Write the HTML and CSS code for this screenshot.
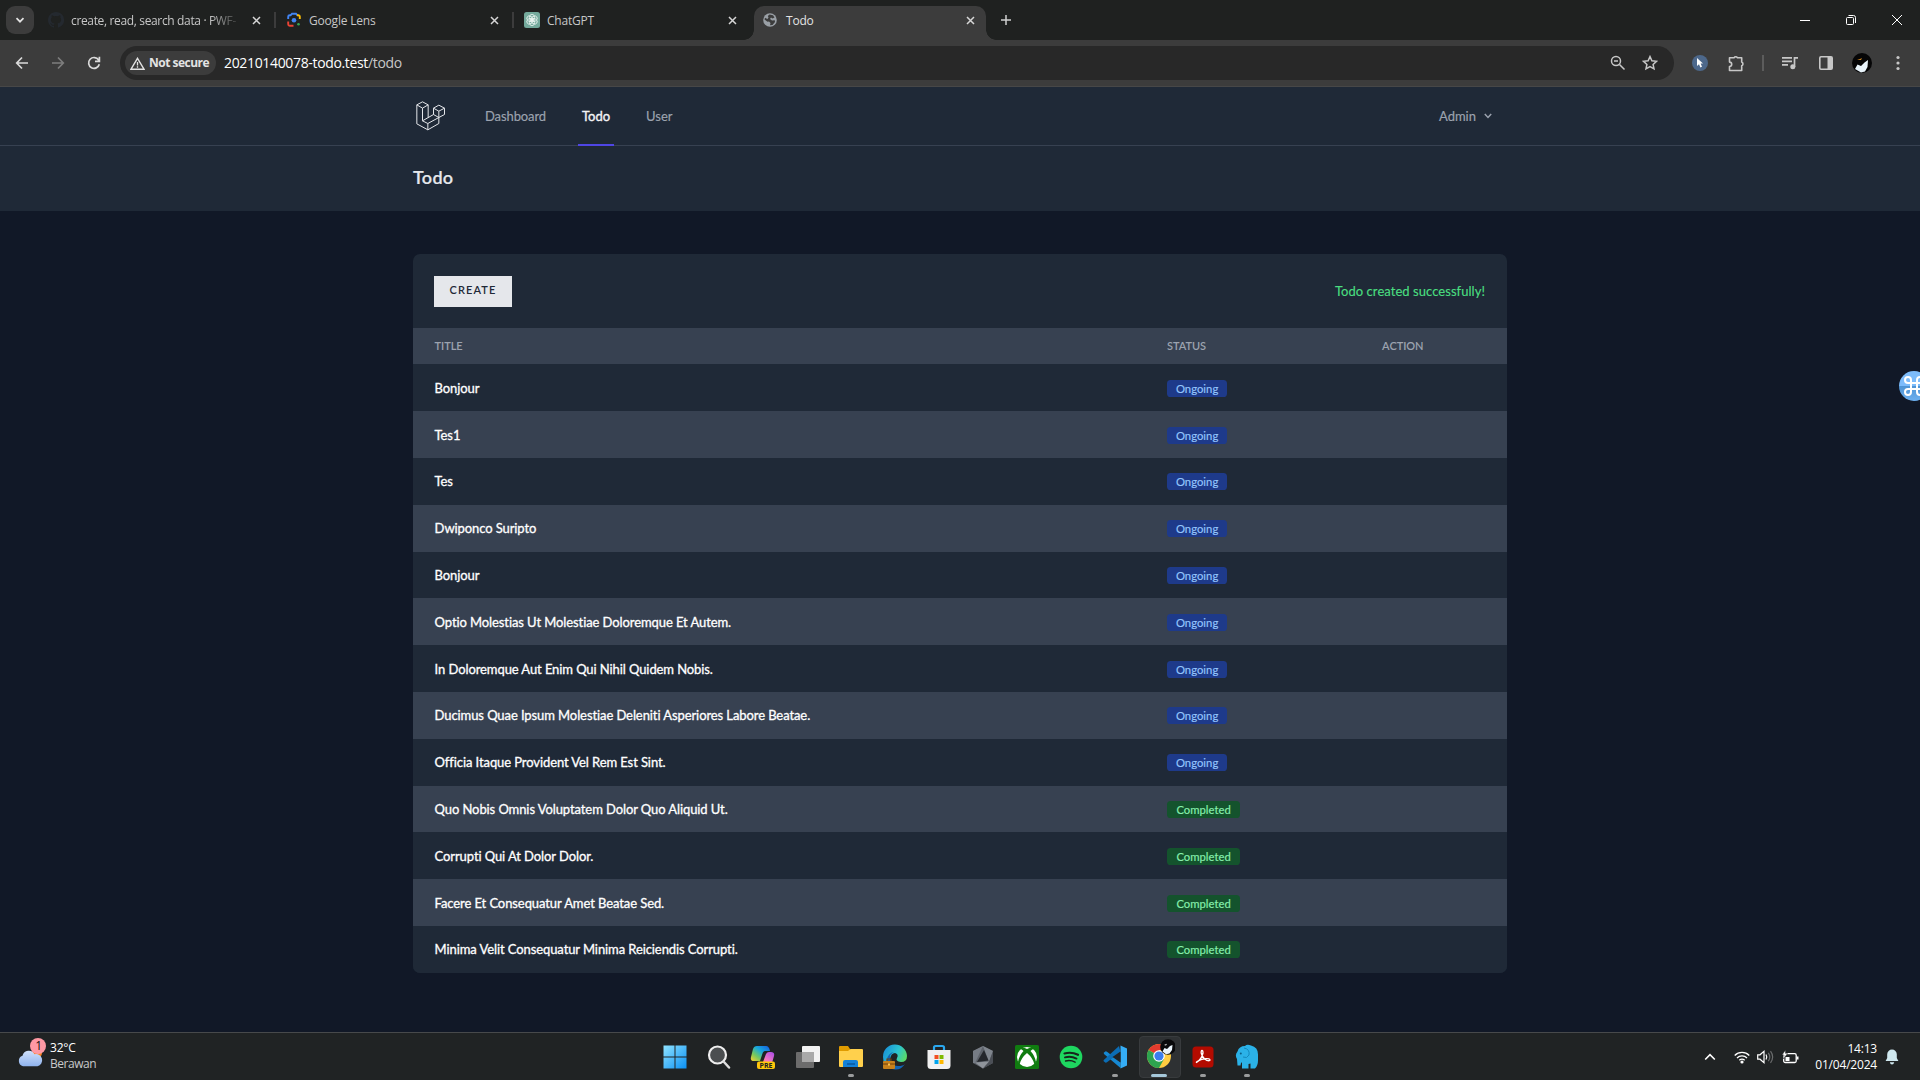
FILE: index.html
```html
<!DOCTYPE html>
<html lang="en">
<head>
<meta charset="utf-8">
<title>Todo</title>
<link rel="stylesheet" href="styles.css">
</head>
<body>
<div class="screen">
  <header class="tabstrip">
    <button class="tab-search"><svg width="10" height="10" viewBox="0 0 10 10"><path d="M1.5 3.2 5 6.7l3.500-3.500" fill="none" stroke="#e3e3e3" stroke-width="1.700"/></svg></button>
    <div class="tab">
      <svg class="favicon" width="16" height="16" viewBox="0 0 16 16"><path fill="#24292f" d="M8 0C3.580 0 0 3.580 0 8c0 3.540 2.290 6.530 5.470 7.590.4.070.55-.17.55-.38v-1.340c-2.230.48-2.700-1.070-2.700-1.070-.36-.92-.89-1.170-.89-1.170-.73-.5.050-.49.050-.49.800.060 1.230.830 1.230.830.720 1.220 1.870.870 2.330.660.070-.52.280-.87.510-1.070-1.780-.2-3.640-.89-3.640-3.950 0-.87.310-1.590.820-2.150-.08-.2-.36-1.020.080-2.120 0 0 .67-.21 2.200.820a7.500 7.500 0 0 1 4 0c1.530-1.040 2.200-.82 2.200-.82.440 1.100.160 1.920.080 2.120.510.560.820 1.270.820 2.150 0 3.070-1.870 3.750-3.650 3.950.290.250.540.730.540 1.480v2.200c0 .21.150.46.550.38A8 8 0 0 0 8 0Z"/></svg>
      <span class="tab-title fade">create, read, search data · PWF-</span>
      <svg class="tab-close" width="9" height="9" viewBox="0 0 9 9"><path d="m1 1 7 7M8 1 1 8"/></svg>
    </div>
    <i class="tab-sep"></i>
    <div class="tab">
      <svg class="favicon" width="16" height="16" viewBox="0 0 16 16"><g fill="none" stroke-width="1.900"><path d="M4.500 3.500 6 1.700h4l1.500 1.800" stroke="#4285f4"/><path d="M2.200 7V4.800a1.500 1.500 0 0 1 1.500-1.500H5" stroke="#4285f4"/><path d="M11 3.300h1.300a1.500 1.500 0 0 1 1.500 1.500V7" stroke="#fbbc04"/><path d="M2.200 9.500v2.700a1.500 1.500 0 0 0 1.500 1.500H7.500" stroke="#ea4335"/></g><circle cx="8" cy="8.300" r="2.300" fill="#4285f4"/><circle cx="12.500" cy="12.300" r="1.300" fill="#34a853"/></svg>
      <span class="tab-title">Google Lens</span>
      <svg class="tab-close" width="9" height="9" viewBox="0 0 9 9"><path d="m1 1 7 7M8 1 1 8"/></svg>
    </div>
    <i class="tab-sep"></i>
    <div class="tab tab-gpt">
      <svg class="favicon" width="16" height="16" viewBox="0 0 16 16"><rect width="16" height="16" rx="2.500" fill="#74aa9c"/><g fill="none" stroke="#eef6f3" stroke-width=".8"><ellipse cx="8" cy="5.600" rx="2.600" ry="3.300"/><ellipse cx="8" cy="5.600" rx="2.600" ry="3.300" transform="rotate(60 8 8)"/><ellipse cx="8" cy="5.600" rx="2.600" ry="3.300" transform="rotate(120 8 8)"/><ellipse cx="8" cy="5.600" rx="2.600" ry="3.300" transform="rotate(180 8 8)"/><ellipse cx="8" cy="5.600" rx="2.600" ry="3.300" transform="rotate(240 8 8)"/><ellipse cx="8" cy="5.600" rx="2.600" ry="3.300" transform="rotate(300 8 8)"/></g></svg>
      <span class="tab-title">ChatGPT</span>
      <svg class="tab-close" width="9" height="9" viewBox="0 0 9 9"><path d="m1 1 7 7M8 1 1 8"/></svg>
    </div>
    <div class="tab active">
      <svg class="favicon" width="14" height="14" viewBox="0 0 14 14"><circle cx="7" cy="7" r="6.800" fill="#9aa0a6"/><path fill="#3c3c3c" d="M6.500 1.500 10 2.300 11.500 4.500 9.500 5.500 8 4.500 7 6 9 7.500 11.800 7.200 12 9 9.500 12 7 12.300 7.500 10 6 8.500 4.500 8.800 1.500 6.500 2 4.800 4.500 6 5.500 4.500 4.800 3Z"/></svg>
      <span class="tab-title">Todo</span>
      <svg class="tab-close" width="9" height="9" viewBox="0 0 9 9"><path d="m1 1 7 7M8 1 1 8"/></svg>
    </div>
    <svg class="new-tab" width="12" height="12" viewBox="0 0 12 12"><path d="M6 1v10M1 6h10" stroke="#d0d0d0" stroke-width="1.500"/></svg>
    <div class="window-buttons">
      <span><svg width="10" height="10" viewBox="0 0 10 10"><path d="M0 5.500h10"/></svg></span>
      <span><svg width="10" height="10" viewBox="0 0 10 10"><rect x=".5" y="2.500" width="7" height="7" rx="1"/><path d="M2.500 .5H7.500a2 2 0 0 1 2 2v5.500"/></svg></span>
      <span><svg width="10" height="10" viewBox="0 0 10 10"><path d="m0 0 10 10M10 0 0 10"/></svg></span>
    </div>
  </header>

  <div class="toolbar">
    <span class="tool"><svg width="14" height="14" viewBox="0 0 14 14"><path d="M13 7H2M7 1.500 1.700 7 7 12.500" fill="none" stroke="#dadada" stroke-width="1.700"/></svg></span>
    <span class="tool"><svg width="14" height="14" viewBox="0 0 14 14"><path d="M1 7h11M7 1.500 12.300 7 7 12.500" fill="none" stroke="#7d7d7d" stroke-width="1.700"/></svg></span>
    <span class="tool"><svg width="14" height="14" viewBox="0 0 14 14"><path d="M11.600 4A5.400 5.400 0 1 0 12.300 8.200M12.400 .8v4.500H8" fill="none" stroke="#dadada" stroke-width="1.700"/></svg></span>
    <div class="omnibox">
      <div class="security"><svg width="15" height="13" viewBox="0 0 15 13"><path d="M7.500 1.300 14 12.200H1Z" fill="none" stroke="#e3e3e3" stroke-width="1.400"/><path d="M7.500 5v3.500M7.500 9.300v1.400" stroke="#e3e3e3" stroke-width="1.300"/></svg><b>Not secure</b></div>
      <div class="url"><span>20210140078-todo.test</span><span class="path">/todo</span></div>
      <svg class="zoom-icon" width="16" height="16" viewBox="0 0 16 16"><g fill="none" stroke="#c7c7c7" stroke-width="1.500"><circle cx="6" cy="6" r="4.500"/><path d="m9.500 9.500 5 5M4 6h4"/></g></svg>
      <svg class="star-icon" width="16" height="16" viewBox="0 0 16 16"><path d="m8 1.600 1.900 4.200 4.600.5-3.400 3.100.9 4.500L8 11.600l-4 2.300.9-4.500L1.500 6.300l4.600-.5Z" fill="none" stroke="#c7c7c7" stroke-width="1.500"/></svg>
    </div>
    <div class="extensions">
      <span class="tool"><svg width="16" height="16" viewBox="0 0 16 16"><circle cx="8" cy="8" r="8" fill="#4d688b"/><path d="m5 3 6 5.500H8.600l1.400 3.300-1.600.6L7 9.300l-2 1.600Z" fill="#fff"/></svg></span>
      <span class="tool"><svg width="17" height="17" viewBox="0 0 17 17"><path d="M1.500 2.800H6a2 2 0 0 1 3.500 0h4.200v4.300a2 2 0 0 1 0 3.700v4.700H1.500v-4a2.200 2.200 0 0 0 0-4.400Z" fill="none" stroke="#c7c7c7" stroke-width="1.600" stroke-linejoin="round"/></svg></span>
      <i class="tool-sep"></i>
      <span class="tool"><svg width="16" height="14" viewBox="0 0 16 14"><path d="M0 1.800h10M0 5.300h10M0 8.800h6M12.500 11V1.800H16" fill="none" stroke="#c7c7c7" stroke-width="1.700"/><circle cx="10.800" cy="10.800" r="2.500" fill="#c7c7c7"/></svg></span>
      <span class="tool"><svg width="14" height="14" viewBox="0 0 14 14"><rect x=".8" y=".8" width="12.400" height="12.400" rx="1.200" fill="none" stroke="#c7c7c7" stroke-width="1.600"/><path d="M8.500 1H13v12H8.500Z" fill="#c7c7c7"/></svg></span>
      <span class="tool"><svg width="20" height="20" viewBox="0 0 20 20"><circle cx="10" cy="10" r="10" fill="#050506"/><path d="m3 16 2.500-4.500L9 13l3.500-3.500L16 7l-.5 7-2.500 4.500L9 19.500Z" fill="#e9f4fb"/><path d="m5 7 3-1 2-1-1 2Z" fill="#d58a20"/></svg></span>
      <span class="tool"><svg width="4" height="16" viewBox="0 0 4 16" fill="#c7c7c7"><circle cx="2" cy="2.500" r="1.600"/><circle cx="2" cy="8" r="1.600"/><circle cx="2" cy="13.500" r="1.600"/></svg></span>
    </div>
  </div>

  <div class="page">
    <nav class="nav">
      <div class="container">
        <svg class="logo" width="30" height="30" viewBox="47.500 45.500 90 90"><path fill="none" stroke="#e5e7eb" stroke-width="3" stroke-linejoin="round" d="M67 48 50 57v57l33 18 33-19V76M67 48l17 9v38M50 57l17 10 17-10M67 67v38l16 8v19M67 105l33-19 16 9-33 18M100 86V67l16-9 17 9v19l-17 9M100 67l16 9 17-9"/></svg>
        <a class="nav-link dash">Dashboard</a>
        <a class="nav-link current">Todo</a>
        <a class="nav-link user">User</a>
        <div class="account"><span>Admin</span><svg width="8" height="6" viewBox="0 0 8 6"><path d="M.8 1 4 4.400 7.200 1" fill="none" stroke="#9ca3af" stroke-width="1.500"/></svg></div>
      </div>
    </nav>
    <div class="page-head"><div class="container"><h2>Todo</h2></div></div>
    <main class="card">
      <div class="card-top"><a class="create">CREATE</a><p class="success">Todo created successfully!</p></div>
      <div class="row thead"><span>TITLE</span><span>STATUS</span><span>ACTION</span></div>
      <div class="row"><span>Bonjour</span><span><em class="badge">Ongoing</em></span></div>
      <div class="row"><span>Tes1</span><span><em class="badge">Ongoing</em></span></div>
      <div class="row"><span>Tes</span><span><em class="badge">Ongoing</em></span></div>
      <div class="row"><span>Dwiponco Suripto</span><span><em class="badge">Ongoing</em></span></div>
      <div class="row"><span>Bonjour</span><span><em class="badge">Ongoing</em></span></div>
      <div class="row"><span>Optio Molestias Ut Molestiae Doloremque Et Autem.</span><span><em class="badge">Ongoing</em></span></div>
      <div class="row"><span>In Doloremque Aut Enim Qui Nihil Quidem Nobis.</span><span><em class="badge">Ongoing</em></span></div>
      <div class="row"><span>Ducimus Quae Ipsum Molestiae Deleniti Asperiores Labore Beatae.</span><span><em class="badge">Ongoing</em></span></div>
      <div class="row"><span>Officia Itaque Provident Vel Rem Est Sint.</span><span><em class="badge">Ongoing</em></span></div>
      <div class="row"><span>Quo Nobis Omnis Voluptatem Dolor Quo Aliquid Ut.</span><span><em class="badge done">Completed</em></span></div>
      <div class="row"><span>Corrupti Qui At Dolor Dolor.</span><span><em class="badge done">Completed</em></span></div>
      <div class="row"><span>Facere Et Consequatur Amet Beatae Sed.</span><span><em class="badge done">Completed</em></span></div>
      <div class="row"><span>Minima Velit Consequatur Minima Reiciendis Corrupti.</span><span><em class="badge done">Completed</em></span></div>
    </main>
    <div class="float-button"><svg width="20" height="20" viewBox="0 0 20 20"><path d="M7 13V4a3 3 0 1 0-3 3h12a3 3 0 1 0-3-3v12a3 3 0 1 0 3-3H4a3 3 0 1 0 3 3v-4" fill="none" stroke="#fff" stroke-width="2"/></svg></div>
  </div>

  <footer class="taskbar">
    <div class="weather">
      <svg width="28" height="30" viewBox="0 0 28 30"><defs><linearGradient id="cloud" x2="0" y2="1"><stop stop-color="#cfe0fb"/><stop offset="1" stop-color="#8fb3ee"/></linearGradient></defs><circle cx="19" cy="15" r="5" fill="#f58220"/><path d="M5.500 28A5.500 5.500 0 0 1 5 17.500 6.500 6.500 0 0 1 17 16a6 6 0 0 1 3 12Z" fill="url(#cloud)" transform="translate(-.5 .2)"/><circle cx="20" cy="8" r="8" fill="#ff99a4"/><text x="20.500" y="12.300" text-anchor="middle" class="weather-count">1</text></svg>
      <div class="weather-text"><span>32°C</span><span class="dim">Berawan</span></div>
    </div>
    <div class="apps">
      <span class="app"><svg width="24" height="24" viewBox="0 0 24 24"><defs><linearGradient id="win" x2="1" y2="1"><stop stop-color="#8fe3ff"/><stop offset="1" stop-color="#0a90f5"/></linearGradient></defs><path fill="url(#win)" d="M.5 .5h11v11H.5ZM12.500 .5h11v11h-11ZM.5 12.500h11v11H.5ZM12.500 12.500h11v11h-11Z"/></svg></span>
      <span class="app"><svg width="24" height="24" viewBox="0 0 24 24"><circle cx="10.500" cy="10" r="8.500" fill="#4b4e50" stroke="#eee" stroke-width="2.200"/><path d="m17 17 5 5.500" stroke="#ddd" stroke-width="2.500" stroke-linecap="round"/></svg></span>
      <span class="app"><svg width="26" height="26" viewBox="0 0 26 26"><defs><linearGradient id="cp1" x1="1" y1="0" x2="0" y2="1"><stop stop-color="#1558e0"/><stop offset=".4" stop-color="#18a9dc"/><stop offset=".7" stop-color="#77c95c"/><stop offset="1" stop-color="#ffd02e"/></linearGradient><linearGradient id="cp2" x1="1" y1="0" x2="0" y2="1"><stop stop-color="#a64bea"/><stop offset=".6" stop-color="#f476c1"/><stop offset="1" stop-color="#ff8d50"/></linearGradient></defs><path d="M7 2h9q3 0 4 5h-5q-2 0-3 4l-2 6H4q-4 0-3-4l2-8q1-3 4-3Z" fill="url(#cp1)"/><path d="M13 18l3-8q1-2 3-2h2q4 0 3 4l-2 7H9q3 0 4-1Z" fill="url(#cp2)"/><rect x="7" y="17.500" width="18" height="7.500" rx="2" fill="#fec70a"/><text x="16" y="24" text-anchor="middle" class="pre-text">PRE</text></svg></span>
      <span class="app"><svg width="25" height="24" viewBox="0 0 25 24"><rect x="7" y="1" width="18" height="16" rx="1" fill="#f2f2f2"/><rect x="1" y="7" width="18" height="16" rx="1" fill="#6c6c6c"/><path d="M7 7h12v10H7Z" fill="#a9a9a9"/></svg></span>
      <span class="app running"><svg width="26" height="24" viewBox="0 0 26 24"><path d="M1 2q0-1 1-1h8l2 3v5H1Z" fill="#e09b00"/><path d="M1 6h9l2.500-2H24q1 0 1 1v16q0 1-1 1H2q-1 0-1-1Z" fill="#ffd04c"/><path d="M5 22v-5q0-2 2-2h11q2 0 2 2v5Z" fill="#1481d8"/><path d="M9 18h8v2H9Z" fill="#0b62ae"/></svg></span>
      <span class="app"><svg width="26" height="26" viewBox="0 0 26 26"><defs><linearGradient id="edge" x2="1" y2=".5"><stop stop-color="#1687d9"/><stop offset=".6" stop-color="#2bc3cf"/><stop offset="1" stop-color="#5ddb62"/></linearGradient></defs><path d="M1 13A12 12 0 0 1 25 12q0 6-6 6-6-1-4-4 2-4-2-5-4 0-5 6 0 7 9 8-4 3-9 1-7-3-7-11Z" fill="url(#edge)"/><path d="M8 13q-1 9 8 9 5 0 7-2-4 6-10 5.500-9-1-8-10Q6 9 12 8q-4 2-4 5Z" fill="#1265b5"/><rect x="1" y="17" width="12" height="8" rx="1" fill="#c8811b"/><path d="M5 17v-2h4v2M1 20h12" fill="none" stroke="#70400d" stroke-width="1.200"/><path d="M6 19.500h2v2H6Z" fill="#ffc34d"/></svg></span>
      <span class="app"><svg width="24" height="26" viewBox="0 0 24 26"><path d="M7 7V3.500q0-1.500 1.500-1.500h7q1.500 0 1.500 1.500V7" fill="none" stroke="#2aa7ee" stroke-width="2.200"/><path d="M.5 6h23v15.500q0 3.500-3.500 3.500H4Q.5 25 .5 21.500Z" fill="#f1f1f1"/><path d="M7.500 11h4v4h-4Z" fill="#f25022"/><path d="M12.500 11h4v4h-4Z" fill="#7fba00"/><path d="M7.500 16h4v4h-4Z" fill="#00a4ef"/><path d="M12.500 16h4v4h-4Z" fill="#ffb900"/></svg></span>
      <span class="app"><svg width="24" height="24" viewBox="0 0 24 24"><path d="m12 1 10 5v12l-10 5.500L2 18V6Z" fill="#5d626a"/><path d="m12 1 10 5-4 11L12 1Z" fill="#7f858d"/><path d="M2 6 12 1 4 18 2 18Z" fill="#767c85"/><path d="m13 5 4.500 10.500L6 17Z" fill="#24272c"/><path d="m4 17.500 14-1-6 7Z" fill="#8f949b"/><path d="m18 17-6 6.500L22 18V6Z" fill="#4b4f56"/></svg></span>
      <span class="app"><svg width="24" height="24" viewBox="0 0 24 24"><rect width="24" height="24" rx="1.500" fill="#107c10"/><circle cx="12" cy="12" r="10" fill="#fff"/><path d="M12 8Q6 13 4.500 19.500L3 17Q4 11 8.500 6 6 3.500 5 4l2-1.500q3 0 5 1.500 2-1.500 5-1.500L19 4q-1-.5-3.500 2 4.500 5 5.500 11l-1.500 2.500Q18 13 12 8Z" fill="#107c10"/></svg></span>
      <span class="app"><svg width="24" height="24" viewBox="0 0 24 24"><circle cx="12" cy="12" r="11.300" fill="#1ed760"/><g fill="none" stroke="#17251c" stroke-linecap="round"><path d="M5.500 8.500q7-2 13.500 1.300" stroke-width="2.200"/><path d="M6 12.400q6-1.600 11.500 1.200" stroke-width="1.900"/><path d="M6.600 16q5-1.200 9.500 1.100" stroke-width="1.500"/></g></svg></span>
      <span class="app running"><svg width="24" height="24" viewBox="0 0 24 24"><path d="M17.500 1v22L1 9l-.3-1.200L2.300 6.500Q3 6 4 6.700L17.500 17Z" fill="#1688d2"/><path d="M17.500 7 4 17.300q-1 .7-1.700.2L.7 16.200q-.5-.6.3-1.400L16 1Z" fill="#0b6db5"/><path d="M17.500 .5 24 3.500v17l-6.500 3Z" fill="#35adf5"/><path d="m17.500 6.500-8 5.500 8 5.500Z" fill="#202324"/></svg></span>
      <span class="app focused"><svg width="30" height="30" viewBox="0 0 30 30"><circle cx="14" cy="17" r="12" fill="#ffcd41"/><path d="M14 17 3.600 11A12 12 0 0 1 24.400 11H14Z" fill="#e33b2e"/><path d="M14 17 3.600 11A12 12 0 0 0 14 29l5-9Z" fill="#2da44f"/><circle cx="14" cy="17" r="5.800" fill="#fff"/><circle cx="14" cy="17" r="4.600" fill="#3b7ded"/><circle cx="23" cy="8" r="7.800" fill="#09090b"/><path d="m17.500 12.500 2-3.500 2.500 1 3-3 2.500-1-.5 5-2.500 3.500-3.500.8Z" fill="#e9f4fb"/><path d="m19 6 3-1.200-1 1.800Z" fill="#eee"/></svg></span>
      <span class="app running"><svg width="22" height="22" viewBox="0 0 22 22"><rect x=".5" y=".5" width="21" height="21" rx="3.500" fill="#b30b00"/><path d="M4.500 16.500q5-3 6.500-9.500 0-2.500-1-2.500t-.8 2.500q1.300 5 5.300 7.300 3.500 1 3.500-.3 0-1.500-4-1.300-4.500.5-8 2.300-2 1.300-1.500 1.500Z" fill="none" stroke="#fff" stroke-width="1.300"/></svg></span>
      <span class="app running"><svg width="24" height="25" viewBox="0 0 24 25"><path d="M2 15Q-.5 11 2.500 7.500 4 2 10 2q2-2 6-.5 7 1.500 7 9v6q0 5-3 8h-4.500v-5l-2 .5v4.500H7V18q-1.500 1-1.500 3.500H2.500Z" fill="#2bb2e8"/><path d="M9 4q6 1 5 7-2 4-6 2" fill="none" stroke="#1489bd" stroke-width="1"/><circle cx="5.800" cy="9.500" r="1" fill="#0b5f87"/></svg></span>
    </div>
    <div class="tray">
      <svg class="chev" width="12" height="8" viewBox="0 0 12 8"><path d="m1.200 6.500 4.800-4.800 4.800 4.800" fill="none" stroke="#fff" stroke-width="1.600"/></svg>
      <svg class="wifi" width="16" height="14" viewBox="0 0 16 14"><g fill="none" stroke="#fff" stroke-width="1.300"><path d="M.7 5.500a10.300 10.300 0 0 1 14.600 0M3 8a7 7 0 0 1 10 0M5.300 10.300a4 4 0 0 1 5.400 0"/></g><circle cx="8" cy="12" r="1.600" fill="#fff"/></svg>
      <svg class="vol" width="17" height="14" viewBox="0 0 17 14"><g fill="none" stroke="#fff" stroke-width="1.200"><path d="M.7 4.800H3L7 1.400v11.200L3 9.200H.7Z"/><path d="M9 4.500q1.500 2.500 0 5"/><path d="M11.300 2.800q3 4.200 0 8.400M13.500 1.200q4.300 5.800 0 11.600" stroke="#6a6c6d"/></g></svg>
      <svg class="batt" width="17" height="14" viewBox="0 0 17 14"><rect x="1.700" y="3.700" width="12.500" height="8.800" rx="1.500" fill="none" stroke="#fff" stroke-width="1.300"/><path d="M14.500 6.500h2v3h-2ZM3.500 7h4v4h-4Z" fill="#fff"/><path d="M3.500 0 0 5h2L1.500 9 5.500 3.500h-2Z" fill="#fff" stroke="#202324" stroke-width=".5"/></svg>
      <div class="clock"><span>14:13</span><span>01/04/2024</span></div>
      <svg class="bell" width="14" height="16" viewBox="0 0 14 16"><path d="M7 .5a4.800 4.800 0 0 1 4.800 4.800V9l1.600 3H.6l1.600-3V5.300A4.800 4.800 0 0 1 7 .5ZM4.800 13.300h4.400Q8.700 15.500 7 15.500t-2.200-2.200Z" fill="#cfe8ef"/></svg>
    </div>
  </footer>
</div>
</body>
</html>
```
FILE: styles.css
```css
* { box-sizing: border-box; }
body { margin: 0; background: #111827; }
svg { display: block; flex: none; }
.screen { width: 1920px; height: 1080px; display: flex; flex-direction: column; overflow: hidden; font-family: "Open Sans", sans-serif; }

/* browser tabs */
.tabstrip { flex: none; height: 40px; background: #1f2120; display: flex; padding-left: 6px; }
.tab-search { width: 28px; height: 28px; margin: 6px 4px 0 0; padding: 0; border: 0; border-radius: 9px; background: #3c3c3c; display: grid; place-items: center; }
.tab { width: 236px; height: 40px; padding: 0 13px 0 10px; display: flex; align-items: center; gap: 7px; }
.tab-title { flex: 1; min-width: 0; white-space: nowrap; font-size: 12px; letter-spacing: -0.2px; color: #c7c7c7; line-height: 20px; padding-top: 1px; }
.fade { letter-spacing: -0.35px; -webkit-mask-image: linear-gradient(90deg, #000 80%, transparent 98%); mask-image: linear-gradient(90deg, #000 80%, transparent 98%); }
.tab-close { stroke: #d6d6d6; stroke-width: 1.500; }
.tab-sep { width: 2px; height: 16px; margin-top: 12px; background: #3c3c3c; }
.tab-gpt { width: 240px; padding: 0 17px 0 10px; }
.tab.active { position: relative; width: 232px; height: 34px; margin-top: 6px; padding: 0 11px 6px 9px; gap: 9px; background: #3c3c3c; border-radius: 10px 10px 0 0; }
.tab.active::before, .tab.active::after { content: ""; position: absolute; bottom: 0; width: 10px; height: 10px; }
.tab.active::before { left: -10px; background: radial-gradient(circle at 0 0, #1f2120 9.500px, #3c3c3c 10px); }
.tab.active::after { right: -10px; background: radial-gradient(circle at 100% 0, #1f2120 9.500px, #3c3c3c 10px); }
.active .tab-title { color: #e3e3e3; }
.new-tab { margin: 14px 0 0 14px; }
.window-buttons { margin-left: auto; display: flex; }
.window-buttons span { width: 46px; height: 40px; display: grid; place-items: center; }
.window-buttons svg { fill: none; stroke: #fff; stroke-width: 1; }

/* address bar */
.toolbar { flex: none; height: 47px; background: #3c3c3c; border-bottom: 1px solid #474747; padding: 0 4px; display: flex; align-items: center; }
.tool { width: 36px; height: 36px; display: grid; place-items: center; }
.omnibox { width: 1554px; height: 34px; margin-left: 8px; border-radius: 17px; background: #282828; display: flex; align-items: center; padding: 0 16px 0 5px; }
.security { width: 91px; height: 24px; border-radius: 12px; background: #3c3c3c; display: flex; align-items: center; gap: 4px; padding-left: 5px; color: #e3e3e3; font-size: 12px; letter-spacing: -0.5px; white-space: nowrap; }
.security b { font-weight: 700; padding-bottom: 1px; }
.url { flex: 1; margin-left: 8px; padding-bottom: 1px; font-size: 14px; letter-spacing: -0.34px; color: #fff; }
.path { color: #c7c7c7; }
.zoom-icon { margin-right: 16px; }
.extensions { display: flex; align-items: center; margin-left: 8px; }
.tool-sep { width: 2px; height: 16px; margin: 0 8px; background: #5c5c5c; }

/* web page */
.page { position: relative; flex: 1; min-height: 0; background: #111827; font-family: Lato, sans-serif; }
.container { width: 1094px; margin: 0 auto; display: flex; }
.nav { height: 59px; background: #1f2937; border-bottom: 1px solid #374151; }
.nav .container { height: 59px; padding-left: 3px; }
.logo { margin-top: 14px; }
.nav-link { height: 59px; padding: 0 4px; font-size: 13px; line-height: 58px; color: #9ca3af; -webkit-text-stroke: .15px; }
.dash { margin-left: 35px; width: 69px; letter-spacing: -0.1px; }
.current { margin-left: 28px; width: 36px; color: #f3f4f6; border-bottom: 2px solid #4f46e5; -webkit-text-stroke: .35px; }
.user { margin-left: 28px; }
.account { margin: 0 15px 0 auto; display: flex; align-items: center; gap: 8px; height: 57px; font-size: 13px; color: #9ca3af; -webkit-text-stroke: .15px; }
.page-head { height: 65px; background: #1f2937; }
h2 { margin: 0; font-size: 18px; line-height: 63px; font-weight: 600; letter-spacing: .3px; color: #e5e7eb; -webkit-text-stroke: .2px; }
.card { width: 1094px; height: 719px; margin: 43px auto 0; background: #1f2937; border-radius: 7px; overflow: hidden; }
.card-top { height: 74px; padding: 0 22px 0 21px; display: flex; align-items: center; justify-content: space-between; }
.create { width: 78px; height: 31px; background: #e5e7eb; color: #1f2937; font-size: 11px; font-weight: 600; letter-spacing: 1.100px; line-height: 28px; text-align: center; }
.success { margin: 0; padding-bottom: 1px; font-size: 13px; letter-spacing: .05px; color: #4ade80; -webkit-text-stroke: .15px; }
.row { height: 46.800px; display: grid; grid-template-columns: 732.500px 215px 1fr; align-items: center; color: #fff; font-size: 13px; letter-spacing: -0.09px; white-space: nowrap; -webkit-text-stroke: .3px; }
.row > span { padding-left: 21.600px; }
.row:nth-child(odd) { background: #1f2937; }
.row:nth-child(even) { background: #374151; }
.row.thead { height: 36.400px; padding-bottom: 2px; color: #9ca3af; font-size: 11px; font-weight: 600; letter-spacing: -0.05px; -webkit-text-stroke: 0; }
.badge { display: block; width: 60px; height: 17px; margin-top: 1px; border-radius: 3.600px; background: #1e3a8a; color: #93c5fd; font-style: normal; font-size: 11.300px; letter-spacing: 0; line-height: 17px; text-align: center; -webkit-text-stroke: .15px; }
.badge.done { width: 73px; background: #14532d; color: #86efac; }
.float-button { position: absolute; left: 1899px; top: 284px; width: 30px; height: 30px; border-radius: 50%; background: linear-gradient(#7dbcfb 50%, #4f94d4 50%, #6cb0f0); padding: 5px; }

/* taskbar */
.taskbar { flex: none; height: 48px; background: #202324; border-top: 1px solid #47494b; display: grid; grid-template-columns: 653px 616px 1fr; color: #fff; font-size: 12px; line-height: 16px; letter-spacing: -0.2px; }
.weather { display: flex; gap: 4px; padding: 5px 0 0 18px; }
.weather-text { display: flex; flex-direction: column; padding-top: 2px; }
.dim { color: #c8c9ca; letter-spacing: -0.45px; }
.weather-count { font: 12px "Open Sans", sans-serif; fill: #111; }
.apps { display: flex; }
.app { position: relative; width: 44px; height: 47px; display: grid; place-items: center; }
.app svg { position: relative; }
.running::after, .focused::after { content: ""; position: absolute; left: 19px; bottom: 3px; width: 6px; height: 3px; border-radius: 2px; background: #9a9c9d; }
.focused::before { content: ""; position: absolute; left: 2px; top: 3px; width: 40px; height: 40px; border-radius: 4px; background: #2e3133; border: 1px solid #383b3d; }
.focused svg { top: -3px; left: 1px; }
.focused::after { left: 14px; width: 16px; background: #a5c8da; }
.pre-text { font: 700 7px "Open Sans", sans-serif; fill: #222; letter-spacing: 0; }
.tray { display: flex; align-items: center; justify-content: flex-end; padding-right: 21px; }
.chev { margin-right: 18px; }
.wifi { margin-right: 7px; }
.vol { margin-right: 8px; }
.clock { width: 70px; margin: 0 8px; display: flex; flex-direction: column; text-align: right; }
```
